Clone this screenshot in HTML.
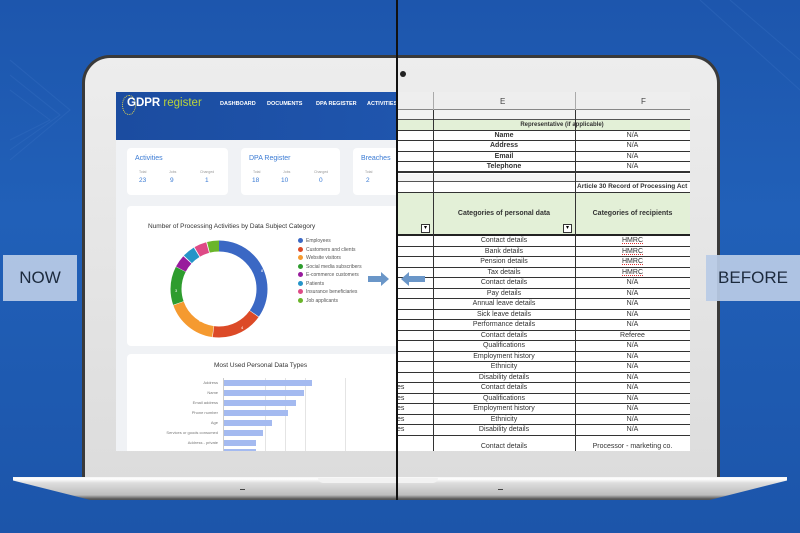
<!DOCTYPE html>
<html><head><meta charset="utf-8"><style>
*{margin:0;padding:0;box-sizing:border-box}
body{width:800px;height:533px;overflow:hidden;position:relative;font-family:"Liberation Sans",sans-serif;
background:linear-gradient(180deg,#1d56ad 0%,#2160b8 40%,#1c55aa 100%)}
.a{position:absolute}
.lbl{background:rgba(185,203,230,0.93);color:#1c2a3d;font-size:17px;display:flex;align-items:center;justify-content:center}
.card{background:#fff;border-radius:4px}
.ct{color:#3b7bd4;font-size:7px}
.sm{font-size:3.5px;color:#999}
.nv{font-size:6.5px;color:#3b7bd4}
.nav{color:#fff;font-size:5.5px;font-weight:bold;top:101px}
.r{position:absolute;left:0;width:295px;height:10.5px;border-bottom:1px solid #333;font-size:7px;color:#333;line-height:10px}
.r span{position:absolute;text-align:center;top:0}
.e{left:38px;width:142px}.f{left:180px;width:115px}
.h{text-decoration:underline dotted #d33}
.leg{font-size:5px;color:#555;position:absolute;left:298px}
.leg i{display:inline-block;width:5px;height:5px;border-radius:50%;margin-right:3px;vertical-align:-1px}
.bl{position:absolute;left:128px;font-size:4px;color:#777;text-align:right;width:90px;line-height:6px}
.bar{position:absolute;left:224px;height:6px;background:#a4baf0}
</style></head><body>
<svg class="a" style="left:0;top:0" width="800" height="533">
<g stroke="#3a72c4" stroke-width="1" opacity=".35" fill="none">
<path d="M10 60 L70 110 L10 160"/><path d="M10 75 L60 115 L10 150"/><path d="M10 90 L50 120 L10 140"/>
<path d="M700 0 L800 90"/><path d="M730 0 L800 60"/>
</g></svg>

<!-- laptop lid -->
<div class="a" style="left:82px;top:55px;width:638px;height:430px;border-radius:28px 28px 0 0;background:#3a3a3a"></div>
<div class="a" style="left:85px;top:58px;width:632px;height:427px;border-radius:25px 25px 0 0;background:linear-gradient(#ededed,#dcdcdc)"></div>
<div class="a" style="left:400px;top:71px;width:6px;height:6px;border-radius:50%;background:#222"></div>
<!-- base -->
<div class="a" style="left:13px;top:477px;width:774px;height:23px;background:linear-gradient(#f4f4f4 0,#fff 2px,#ddd 6px,#bcbcbc 18px,#555 22px);clip-path:polygon(0 0,100% 0,100% 15%,90% 100%,10% 100%,0 15%)"></div>
<div class="a" style="left:318px;top:478px;width:120px;height:5px;background:#f2f2f2;border-radius:0 0 10px 10px"></div>
<div class="a" style="left:240px;top:489px;width:5px;height:1px;background:#444"></div>
<div class="a" style="left:498px;top:489px;width:5px;height:1px;background:#444"></div>

<!-- screen left -->
<div class="a" style="left:116px;top:92px;width:281px;height:359px;background:#f0f2f5;overflow:hidden">
 <div class="a" style="left:0;top:0;width:281px;height:48px;background:linear-gradient(90deg,#1b4ca0,#1f55ad)"></div>
 <div class="a" style="left:6px;top:3px;width:14px;height:20px;border-radius:50%;border:1px dotted #e6d84a"></div>
 <div class="a" style="left:11px;top:5px;font-size:11.5px;color:#fff;font-weight:bold">GDPR <span style="color:#b9d33c;font-weight:normal">register</span></div>
 <div class="a nav" style="left:104px;top:9px">DASHBOARD</div>
 <div class="a nav" style="left:151px;top:9px">DOCUMENTS</div>
 <div class="a nav" style="left:200px;top:9px">DPA REGISTER</div>
 <div class="a nav" style="left:251px;top:9px">ACTIVITIES</div>
 <div class="a card" style="left:11px;top:56px;width:101px;height:47px">
  <div class="a ct" style="left:8px;top:7px">Activities</div>
  <div class="a sm" style="left:12px;top:22px">Total</div><div class="a sm" style="left:42px;top:22px">Jobs</div><div class="a sm" style="left:73px;top:22px">Changed</div>
  <div class="a nv" style="left:12px;top:29px">23</div><div class="a nv" style="left:43px;top:29px">9</div><div class="a nv" style="left:78px;top:29px">1</div>
 </div>
 <div class="a card" style="left:125px;top:56px;width:99px;height:47px">
  <div class="a ct" style="left:8px;top:7px">DPA Register</div>
  <div class="a sm" style="left:12px;top:22px">Total</div><div class="a sm" style="left:42px;top:22px">Jobs</div><div class="a sm" style="left:73px;top:22px">Changed</div>
  <div class="a nv" style="left:11px;top:29px">18</div><div class="a nv" style="left:40px;top:29px">10</div><div class="a nv" style="left:78px;top:29px">0</div>
 </div>
 <div class="a card" style="left:237px;top:56px;width:60px;height:47px">
  <div class="a ct" style="left:8px;top:7px">Breaches</div>
  <div class="a sm" style="left:12px;top:22px">Total</div>
  <div class="a nv" style="left:13px;top:29px">2</div>
 </div>
 <div class="a card" style="left:11px;top:114px;width:290px;height:140px"></div>
 <div class="a" style="left:32px;top:131px;font-size:6.5px;color:#333">Number of Processing Activities by Data Subject Category</div>
 <svg class="a" style="left:0;top:0" width="281" height="359">
  <g transform="rotate(-90 103 197)" fill="none" stroke-width="11">
   <circle cx="103" cy="197" r="43" stroke="#3b68c4" stroke-dasharray="93.5 300" stroke-dashoffset="0"/>
   <circle cx="103" cy="197" r="43" stroke="#dc4a27" stroke-dasharray="46.5 300" stroke-dashoffset="-94"/>
   <circle cx="103" cy="197" r="43" stroke="#f59a30" stroke-dasharray="46.5 300" stroke-dashoffset="-141"/>
   <circle cx="103" cy="197" r="43" stroke="#2e9c2e" stroke-dasharray="34.7 300" stroke-dashoffset="-188"/>
   <circle cx="103" cy="197" r="43" stroke="#981b9c" stroke-dasharray="11.2 300" stroke-dashoffset="-223"/>
   <circle cx="103" cy="197" r="43" stroke="#2594c8" stroke-dasharray="11.2 300" stroke-dashoffset="-235"/>
   <circle cx="103" cy="197" r="43" stroke="#de4a86" stroke-dasharray="11.2 300" stroke-dashoffset="-247"/>
   <circle cx="103" cy="197" r="43" stroke="#6ab52a" stroke-dasharray="11.2 300" stroke-dashoffset="-259"/>
  </g>
  <g font-size="4" fill="#fff" font-family="Liberation Sans"><text x="145" y="180">8</text><text x="125" y="237">4</text><text x="83" y="230">4</text><text x="59" y="200">3</text></g>
 </svg>
 <div class="a" style="left:0;top:0;width:281px">
  <div class="leg" style="left:182px;top:146px"><i style="background:#3b68c4"></i>Employees</div>
  <div class="leg" style="left:182px;top:154.5px"><i style="background:#dc4a27"></i>Customers and clients</div>
  <div class="leg" style="left:182px;top:163px"><i style="background:#f59a30"></i>Website visitors</div>
  <div class="leg" style="left:182px;top:171.5px"><i style="background:#2e9c2e"></i>Social media subscribers</div>
  <div class="leg" style="left:182px;top:180px"><i style="background:#981b9c"></i>E-commerce customers</div>
  <div class="leg" style="left:182px;top:188.5px"><i style="background:#2594c8"></i>Patients</div>
  <div class="leg" style="left:182px;top:197px"><i style="background:#de4a86"></i>Insurance beneficiaries</div>
  <div class="leg" style="left:182px;top:205.5px"><i style="background:#6ab52a"></i>Job applicants</div>
 </div>
 <div class="a card" style="left:11px;top:262px;width:290px;height:110px"></div>
 <div class="a" style="left:98px;top:270px;font-size:6.5px;color:#333">Most Used Personal Data Types</div>
</div>
<div class="a" style="left:0;top:0;width:397px;height:451px;overflow:hidden">
 <div class="a" style="left:265px;top:378px;width:1px;height:73px;background:#e4e4e4"></div>
 <div class="a" style="left:285px;top:378px;width:1px;height:73px;background:#e4e4e4"></div>
 <div class="a" style="left:305px;top:378px;width:1px;height:73px;background:#e4e4e4"></div>
 <div class="a" style="left:345px;top:378px;width:1px;height:73px;background:#e4e4e4"></div>
 <div class="a" style="left:223px;top:378px;width:1px;height:73px;background:#ccc"></div>
 <div class="bl" style="top:380px">Address</div><div class="bar" style="top:380px;width:88px"></div>
 <div class="bl" style="top:390px">Name</div><div class="bar" style="top:390px;width:80px"></div>
 <div class="bl" style="top:400px">Email address</div><div class="bar" style="top:400px;width:72px"></div>
 <div class="bl" style="top:410px">Phone number</div><div class="bar" style="top:410px;width:64px"></div>
 <div class="bl" style="top:420px">Age</div><div class="bar" style="top:420px;width:48px"></div>
 <div class="bl" style="top:430px">Services or goods consumed</div><div class="bar" style="top:430px;width:39px"></div>
 <div class="bl" style="top:440px">Address - private</div><div class="bar" style="top:440px;width:32px"></div>
 <div class="bar" style="top:449px;width:32px"></div>
 <svg class="a" style="left:368px;top:272px" width="24" height="14"><path d="M0 4 H13 V0 L21 7 L13 14 V10 H0Z" fill="#6a96c8"/></svg>
</div>

<!-- screen right -->
<div class="a" style="left:397px;top:92px;width:293px;height:359px;background:#fff;overflow:hidden">
 <div class="a" style="left:-2px;top:0;width:300px">
  <div class="a" style="left:0;top:0;width:300px;height:18px;background:#eee;border-bottom:1px solid #888"></div>
  <div class="a" style="left:38px;top:0;width:1px;height:18px;background:#aaa"></div>
  <div class="a" style="left:180px;top:0;width:1px;height:18px;background:#aaa"></div>
  <div class="a" style="left:105px;top:5px;font-size:8px;color:#444">E</div>
  <div class="a" style="left:246px;top:5px;font-size:8px;color:#444">F</div>
  <div class="a" style="left:0;top:18px;width:300px;height:10px;background:#f2f2f2;border-bottom:1.5px solid #555"></div>
  <div class="r" style="top:28px;background:#e3f0d7"><span style="left:38px;width:257px;font-weight:bold;font-size:6px;border-left:1px solid #333;height:10px">Representative (if applicable)</span></div>
  <div class="r" style="top:38.5px"><span class="e" style="font-weight:bold">Name</span><span class="f">N/A</span></div>
  <div class="r" style="top:49px"><span class="e" style="font-weight:bold">Address</span><span class="f">N/A</span></div>
  <div class="r" style="top:59.5px"><span class="e" style="font-weight:bold">Email</span><span class="f">N/A</span></div>
  <div class="r" style="top:70px;border-bottom:2px solid #333"><span class="e" style="font-weight:bold">Telephone</span><span class="f">N/A</span></div>
  <div class="a" style="left:0;top:82px;width:300px;height:8px;background:#f4f4f4;border-bottom:1.5px solid #555"></div>
  <div class="r" style="top:90px"><span style="left:182px;width:120px;font-weight:bold;font-size:6.5px;text-align:left">Article 30 Record of Processing Act</span></div>
  <div class="a" style="left:0;top:101px;width:300px;height:43px;background:#e3f0d7;border-bottom:2.5px solid #222"></div>
  <div class="a" style="left:38px;top:118px;width:142px;text-align:center;font-size:7px;font-weight:bold;color:#333">Categories of personal data</div>
  <div class="a" style="left:180px;top:118px;width:115px;text-align:center;font-size:7px;font-weight:bold;color:#333">Categories of recipients</div>
  <div class="a" style="left:26px;top:132px;width:9px;height:9px;border:1px solid #333;background:#fff;font-size:6px;text-align:center;line-height:7px">▾</div>
  <div class="a" style="left:168px;top:132px;width:9px;height:9px;border:1px solid #333;background:#fff;font-size:6px;text-align:center;line-height:7px">▾</div>
  <div class="r" style="top:144px"><span class="e">Contact details</span><span class="f"><u class="h">HMRC</u></span></div>
  <div class="r" style="top:154.5px"><span class="e">Bank details</span><span class="f"><u class="h">HMRC</u></span></div>
  <div class="r" style="top:165px"><span class="e">Pension details</span><span class="f"><u class="h">HMRC</u></span></div>
  <div class="r" style="top:175.5px"><span class="e">Tax details</span><span class="f"><u class="h">HMRC</u></span></div>
  <div class="r" style="top:186px"><span class="e">Contact details</span><span class="f">N/A</span></div>
  <div class="r" style="top:196.5px"><span class="e">Pay details</span><span class="f">N/A</span></div>
  <div class="r" style="top:207px"><span class="e">Annual leave details</span><span class="f">N/A</span></div>
  <div class="r" style="top:217.5px"><span class="e">Sick leave details</span><span class="f">N/A</span></div>
  <div class="r" style="top:228px"><span class="e">Performance details</span><span class="f">N/A</span></div>
  <div class="r" style="top:238.5px"><span class="e">Contact details</span><span class="f">Referee</span></div>
  <div class="r" style="top:249px"><span class="e">Qualifications</span><span class="f">N/A</span></div>
  <div class="r" style="top:259.5px"><span class="e">Employment history</span><span class="f">N/A</span></div>
  <div class="r" style="top:270px"><span class="e">Ethnicity</span><span class="f">N/A</span></div>
  <div class="r" style="top:280.5px"><span class="e">Disability details</span><span class="f">N/A</span></div>
  <div class="r" style="top:291px"><span style="left:2px">es</span><span class="e">Contact details</span><span class="f">N/A</span></div>
  <div class="r" style="top:301.5px"><span style="left:2px">es</span><span class="e">Qualifications</span><span class="f">N/A</span></div>
  <div class="r" style="top:312px"><span style="left:2px">es</span><span class="e">Employment history</span><span class="f">N/A</span></div>
  <div class="r" style="top:322.5px"><span style="left:2px">es</span><span class="e">Ethnicity</span><span class="f">N/A</span></div>
  <div class="r" style="top:333px"><span style="left:2px">es</span><span class="e">Disability details</span><span class="f">N/A</span></div>
  <div class="r" style="top:343.5px;height:22px;line-height:22px;border:none"><span class="e">Contact details</span><span class="f">Processor - marketing co.</span></div>
  <div class="a" style="left:38px;top:18px;width:1px;height:345px;background:#333"></div>
  <div class="a" style="left:180px;top:18px;width:1px;height:345px;background:#333"></div>
 </div>
 <svg class="a" style="left:4px;top:180px" width="24" height="14"><path d="M24 4 H8 V0 L0 7 L8 14 V10 H24Z" fill="#6a96c8"/></svg>
</div>
<div class="a" style="left:396px;top:0;width:2px;height:500px;background:#111"></div>
<div class="a lbl" style="left:3px;top:255px;width:74px;height:46px">NOW</div>
<div class="a lbl" style="left:706px;top:255px;width:94px;height:46px">BEFORE</div>
</body></html>
